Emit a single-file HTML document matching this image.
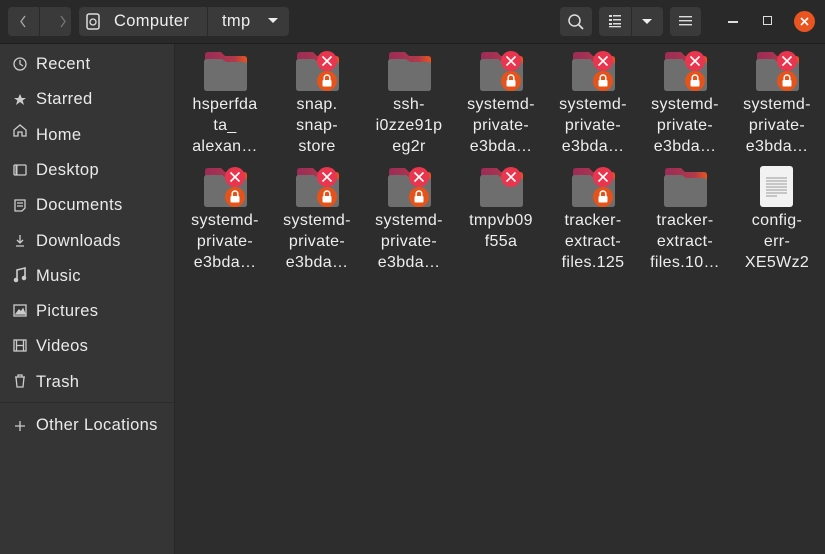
<!DOCTYPE html><html><head><meta charset="utf-8"><style>
*{margin:0;padding:0;box-sizing:border-box}
body{width:825px;height:554px;overflow:hidden;background:#2d2d2d;font-family:"Liberation Sans","DejaVu Sans",sans-serif;color:#eee;position:relative;letter-spacing:0.35px}
#hdr{position:absolute;left:0;top:0;width:825px;height:44px;background:#292929;border-bottom:1px solid #1e1e1e}
.btn{position:absolute;top:7px;height:29px;background:#3a3a3a;border-radius:4px}
#side{position:absolute;left:0;top:44px;width:175px;height:510px;background:#353535;border-right:1px solid #262626}
.si{position:absolute;left:36px;font-size:16.5px;color:#eaeaea}
.it{position:absolute;width:92px;text-align:center;font-size:16px;line-height:21px;color:#eee}
</style></head><body>
<div id="hdr">
<div class="btn" style="left:8px;width:63px"></div>
<div style="position:absolute;left:39px;top:7px;width:1px;height:29px;background:#2a2a2a"></div>
<svg style="position:absolute;left:8px;top:7px" width="63" height="29"><path d="M17 9 L13 14.5 L17 20" stroke="#aaa" fill="none" stroke-width="1.3"/><path d="M53 9 L57 14.5 L53 20" stroke="#777" fill="none" stroke-width="1.3"/></svg>
<div class="btn" style="left:79px;width:210px"></div>
<div style="position:absolute;left:207px;top:7px;width:1px;height:29px;background:#2a2a2a"></div>
<svg style="position:absolute;left:86px;top:13px" width="14" height="17"><rect x="1" y="1" width="12" height="15" rx="2" stroke="#ddd" fill="none" stroke-width="1.5"/><circle cx="7" cy="9" r="3" stroke="#ddd" fill="none" stroke-width="1.3"/></svg>
<div style="position:absolute;left:114px;top:12px;font-size:16.5px;color:#eee">Computer</div>
<div style="position:absolute;left:222px;top:12px;font-size:16.5px;color:#eee">tmp</div>
<svg style="position:absolute;left:268px;top:18px" width="10" height="6"><path d="M0 0H10L5 5Z" fill="#eee"/></svg>
<div class="btn" style="left:560px;width:32px"></div>
<svg style="position:absolute;left:567px;top:13px" width="18" height="18"><circle cx="7.5" cy="7.5" r="5.5" stroke="#ddd" fill="none" stroke-width="1.5"/><path d="M11.5 11.5L16 16" stroke="#ddd" stroke-width="1.8"/></svg>
<div class="btn" style="left:599px;width:64px"></div>
<div style="position:absolute;left:631px;top:7px;width:1px;height:29px;background:#2a2a2a"></div>
<svg style="position:absolute;left:608px;top:14px" width="14" height="14"><g fill="#ddd"><rect x="1" y="1" width="3" height="2"/><rect x="1" y="5" width="3" height="2"/><rect x="1" y="9" width="3" height="2"/><rect x="5" y="1" width="8" height="1.5"/><rect x="5" y="5" width="8" height="1.5"/><rect x="5" y="9" width="8" height="1.5"/><rect x="1" y="12" width="12" height="1.3"/></g></svg>
<svg style="position:absolute;left:642px;top:19px" width="10" height="6"><path d="M0 0H10L5 5Z" fill="#eee"/></svg>
<div class="btn" style="left:670px;width:31px"></div>
<svg style="position:absolute;left:679px;top:15px" width="13" height="12"><g fill="#ddd"><rect y="1" width="13" height="1.4"/><rect y="5" width="13" height="1.4"/><rect y="9" width="13" height="1.4"/></g></svg>
<div style="position:absolute;left:728px;top:21px;width:10px;height:2px;background:#ddd"></div>
<div style="position:absolute;left:763px;top:16px;width:9px;height:9px;border:1.5px solid #ddd"></div>
<div style="position:absolute;left:794px;top:11px;width:21px;height:21px;border-radius:50%;background:#e95420"></div>
<svg style="position:absolute;left:799px;top:16px" width="11" height="11"><path d="M2 2L9 9M9 2L2 9" stroke="#fff" stroke-width="1.6"/></svg>
</div>
<div id="side">
<div class="si" style="top:11px">Recent</div>
<div class="si" style="top:46px">Starred</div>
<div class="si" style="top:82px">Home</div>
<div class="si" style="top:117px">Desktop</div>
<div class="si" style="top:152px">Documents</div>
<div class="si" style="top:188px">Downloads</div>
<div class="si" style="top:223px">Music</div>
<div class="si" style="top:258px">Pictures</div>
<div class="si" style="top:293px">Videos</div>
<div class="si" style="top:329px">Trash</div>
<div style="position:absolute;left:0;top:358px;width:174px;height:1px;background:#2c2c2c"></div>
<div class="si" style="top:372px">Other Locations</div>
<svg style="position:absolute;left:12px;top:0" width="20" height="400" fill="none" stroke="#ccc" stroke-width="1.3">
<circle cx="8" cy="20" r="6"/><path d="M8 16V20L11 22"/>
<path d="M8 50L9.8 54H14L10.6 56.5L12 61L8 58L4 61L5.4 56.5L2 54H6.2Z" fill="#ccc" stroke="none"/>
<path d="M2 92V86L8 81L14 86V92H10V88H6V92Z"/>
<rect x="2" y="121" width="12" height="10" rx="1"/><path d="M4.5 121V131" stroke-width="2"/>
<path d="M3 156H13V164L10 167H3Z"/><path d="M5 159H11M5 162H11"/>
<path d="M8 191V199M5 196L8 199L11 196M4 202H12"/>
<path d="M5 236V226L13 224V234" stroke-width="1.6"/><circle cx="4" cy="236" r="1.6" fill="#ccc"/><circle cx="12" cy="234" r="1.6" fill="#ccc"/>
<rect x="2" y="261" width="12" height="11"/><path d="M4 270L7 266L9 268L11 265L13 270Z" fill="#ccc"/>
<rect x="2" y="296" width="12" height="11"/><path d="M4.5 296V307M11.5 296V307M5 301.5H11"/>
<path d="M3 333H13M6 333V331H10V333M4 333L5 343H11L12 333"/>
<path d="M8 377V387M3 382H13"/>
</svg>
</div>
<svg width="0" height="0" style="position:absolute"><defs>
<linearGradient id="tab" x1="0" x2="1"><stop offset="0" stop-color="#9c2b58"/><stop offset="0.7" stop-color="#b03a4a"/><stop offset="1" stop-color="#e8541f"/></linearGradient>
<g id="f"><path d="M1 3Q1 0 4 0H17L21 4H40Q43 4 43 7V12H1Z" fill="url(#tab)"/><path d="M0 10Q0 7 3 7H18L22 10H40Q43 10 43 13V36Q43 39 40 39H3Q0 39 0 36Z" fill="#6e6e6e"/></g>
<g id="x"><circle cx="0" cy="0" r="10" fill="#e9364e"/><path d="M-4.5 -4.5L4.5 4.5M4.5 -4.5L-4.5 4.5" stroke="#fff" stroke-width="1.6"/></g>
<g id="l"><circle cx="0" cy="0" r="10" fill="#e5531a"/><path d="M-2.8 -1V-3.2A2.8 2.8 0 0 1 2.8 -3.2V-1" stroke="#fff" stroke-width="1.5" fill="none"/><rect x="-4.5" y="-1" width="9" height="6.5" rx="1" fill="#fff"/></g>
</defs></svg>
<svg style="position:absolute;left:0;top:0" width="825" height="554">
<use href="#f" x="204" y="52"/>
<use href="#f" x="296" y="52"/><use href="#x" x="327" y="61"/><use href="#l" x="327" y="81"/>
<use href="#f" x="388" y="52"/>
<use href="#f" x="480" y="52"/><use href="#x" x="511" y="61"/><use href="#l" x="511" y="81"/>
<use href="#f" x="572" y="52"/><use href="#x" x="603" y="61"/><use href="#l" x="603" y="81"/>
<use href="#f" x="664" y="52"/><use href="#x" x="695" y="61"/><use href="#l" x="695" y="81"/>
<use href="#f" x="756" y="52"/><use href="#x" x="787" y="61"/><use href="#l" x="787" y="81"/>
<use href="#f" x="204" y="168"/><use href="#x" x="235" y="177"/><use href="#l" x="235" y="197"/>
<use href="#f" x="296" y="168"/><use href="#x" x="327" y="177"/><use href="#l" x="327" y="197"/>
<use href="#f" x="388" y="168"/><use href="#x" x="419" y="177"/><use href="#l" x="419" y="197"/>
<use href="#f" x="480" y="168"/><use href="#x" x="511" y="177"/>
<use href="#f" x="572" y="168"/><use href="#x" x="603" y="177"/><use href="#l" x="603" y="197"/>
<use href="#f" x="664" y="168"/>
<rect x="760" y="166" width="33" height="41" rx="3" fill="#f2f2f2"/>
<g stroke="#999" stroke-width="1"><path d="M766 178H787M766 181H787M766 184H787M766 187H787M766 190H787M766 193H787M766 196H777"/></g>
</svg>
<div class="it" style="left:179px;top:94px">hsperfda<br>ta_<br>alexan…</div>
<div class="it" style="left:271px;top:94px">snap.<br>snap-<br>store</div>
<div class="it" style="left:363px;top:94px">ssh-<br>i0zze91p<br>eg2r</div>
<div class="it" style="left:455px;top:94px">systemd-<br>private-<br>e3bda…</div>
<div class="it" style="left:547px;top:94px">systemd-<br>private-<br>e3bda…</div>
<div class="it" style="left:639px;top:94px">systemd-<br>private-<br>e3bda…</div>
<div class="it" style="left:731px;top:94px">systemd-<br>private-<br>e3bda…</div>
<div class="it" style="left:179px;top:210px">systemd-<br>private-<br>e3bda…</div>
<div class="it" style="left:271px;top:210px">systemd-<br>private-<br>e3bda…</div>
<div class="it" style="left:363px;top:210px">systemd-<br>private-<br>e3bda…</div>
<div class="it" style="left:455px;top:210px">tmpvb09<br>f55a</div>
<div class="it" style="left:547px;top:210px">tracker-<br>extract-<br>files.125</div>
<div class="it" style="left:639px;top:210px">tracker-<br>extract-<br>files.10…</div>
<div class="it" style="left:731px;top:210px">config-<br>err-<br>XE5Wz2</div>
</body></html>
